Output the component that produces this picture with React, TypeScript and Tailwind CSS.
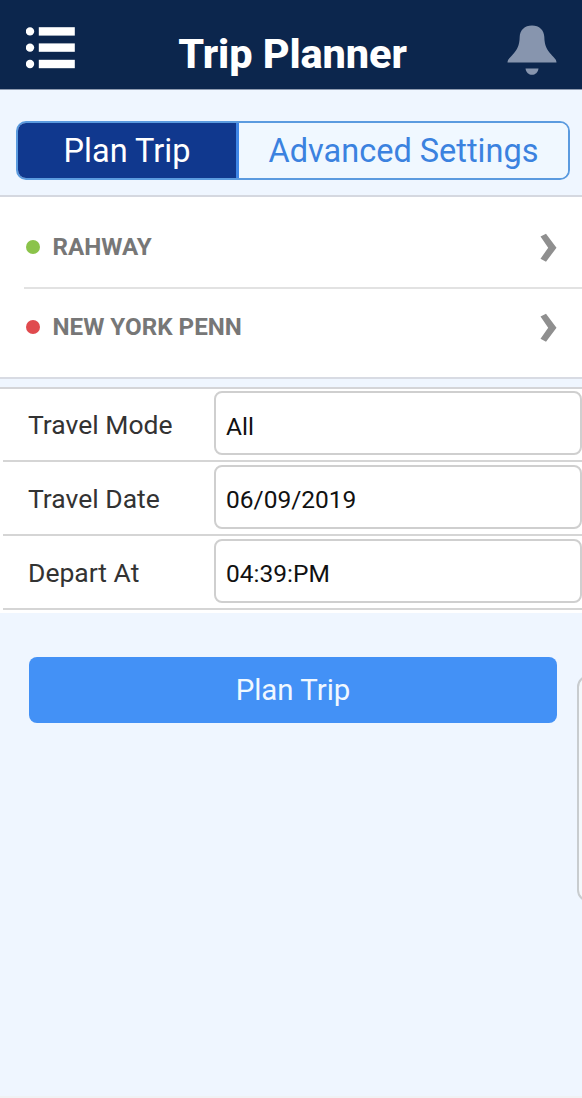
const stops = [
  { name: "RAHWAY", dot: "bg-[#8bc34a]" },
  { name: "NEW YORK PENN", dot: "bg-[#e04a4e]" },
];

const fields = [
  { label: "Travel Mode", value: "All", height: "h-[73px]" },
  { label: "Travel Date", value: "06/09/2019", height: "h-[74px]" },
  { label: "Depart At", value: "04:39:PM", height: "h-[74px]" },
];

function MenuIcon() {
  return (
    <svg width="50" height="44" viewBox="0 0 50 44" fill="#fff">
      {[6.4, 22.6, 39].map((y) => (
        <g key={y}>
          <circle cx="4" cy={y} r="4.2" />
          <rect x="12.8" y={y - 4.2} width="36" height="8.4" />
        </g>
      ))}
    </svg>
  );
}

function BellIcon() {
  return (
    <svg width="50" height="50" viewBox="0 0 50 50" fill="#8795ae">
      <path d="M25 .4c7.400 0 12 4.800 12.300 11.300.2 9 2.500 12.500 6.700 17.500 2.800 3.300 5.500 5 5.500 8.300H.5c0-3.300 2.700-5 5.500-8.300 4.200-5 6.500-8.500 6.700-17.500C13 5.200 17.600.4 25 .4Z" />
      <path d="M18.500 43.500h13c-.6 4-3.200 6.300-6.500 6.300s-5.900-2.300-6.500-6.300Z" />
    </svg>
  );
}

function Chevron() {
  return (
    <svg className="mt-px" width="18" height="30" viewBox="0 0 18 30" fill="#8f8f8f">
      <path d="M1.500 3.500 7 .8 17.500 14.700 7 28.700 1.500 25.700 9.200 14.700Z" />
    </svg>
  );
}

export default function App() {
  return (
    <div className="relative flex h-[1098px] w-full flex-col overflow-hidden border-b-2 border-[#f0f2f4] bg-[#eff6ff] font-[Roboto,sans-serif]">
      <header className="flex h-[90px] shrink-0 items-start justify-between border-b border-[#8f9bb0] bg-[#0c264d] pr-[25px] pl-[26px]">
        <button className="mt-[25px]"><MenuIcon /></button>
        <h1 className="mt-[30px] ml-[2px] text-[41.500px] leading-[48px] font-extrabold tracking-[-0.1px] whitespace-nowrap text-white">Trip Planner</h1>
        <button className="mt-[25px]"><BellIcon /></button>
      </header>

      <div className="h-[107px] shrink-0 border-b-2 border-[#d5d8e0] pt-[31px] pr-[12px] pl-[16px]">
        <div className="flex h-[59px] overflow-hidden rounded-[10px] border-2 border-[#5b9bdf] text-[32.500px] leading-[57px]">
          <button className="w-[221px] border-r-3 border-[#3f86e6] bg-[#10388e] text-white">Plan Trip</button>
          <button className="flex-1 bg-[#f0f8ff] text-[#3b82df]">Advanced Settings</button>
        </div>
      </div>

      <div className="flex h-[182px] shrink-0 flex-col border-b-2 border-[#d8dbe3] bg-white pl-[24px]">
        {stops.map((stop, i) => (
          <div key={stop.name} className={i === 0 ? "flex h-[92px] items-start border-b-2 border-[#e2e2e2] pt-[35px] pr-[25px]" : "flex h-[88px] items-start pt-[23px] pr-[25px]"}>
            <span className={`mt-[8px] ml-[2px] size-[14px] rounded-full ${stop.dot}`} />
            <span className="ml-[12.500px] flex-1 text-[24.200px] leading-[30px] font-bold text-[#777]">{stop.name}</span>
            <Chevron />
          </div>
        ))}
      </div>

      <div className="mt-[8px] shrink-0 border-t-2 border-[#d4d5d8] bg-white pb-[3px]">
        {fields.map((field, i) => (
          <label key={field.label} className={`ml-[3px] flex items-start border-b-2 border-[#d5d5d5] ${i === 0 ? "pt-[2px]" : "pt-[3px]"} ${field.height}`}>
            <span className="mt-[18px] w-[211px] pl-[25px] text-[26.500px] leading-[32px] text-[#333]">{field.label}</span>
            <span className={`h-[64px] flex-1 rounded-[8px] border-2 border-[#cfcfcf] pl-[10px] text-[24.500px] leading-[32px] text-[#111] ${i === 0 ? "pt-[18px]" : "pt-[17px]"}`}>{field.value}</span>
          </label>
        ))}
      </div>

      <button className="mt-[44px] mr-[25px] ml-[29px] h-[66px] shrink-0 rounded-[8px] bg-[#4391f6] text-[29.400px] leading-[66px] text-[#f0f8ff]">Plan Trip</button>

      <div className="absolute top-[675px] left-[577px] h-[227px] w-[40px] rounded-[12px] border-2 border-[#c8cccf] bg-[#f4f8fb]" />
    </div>
  );
}
